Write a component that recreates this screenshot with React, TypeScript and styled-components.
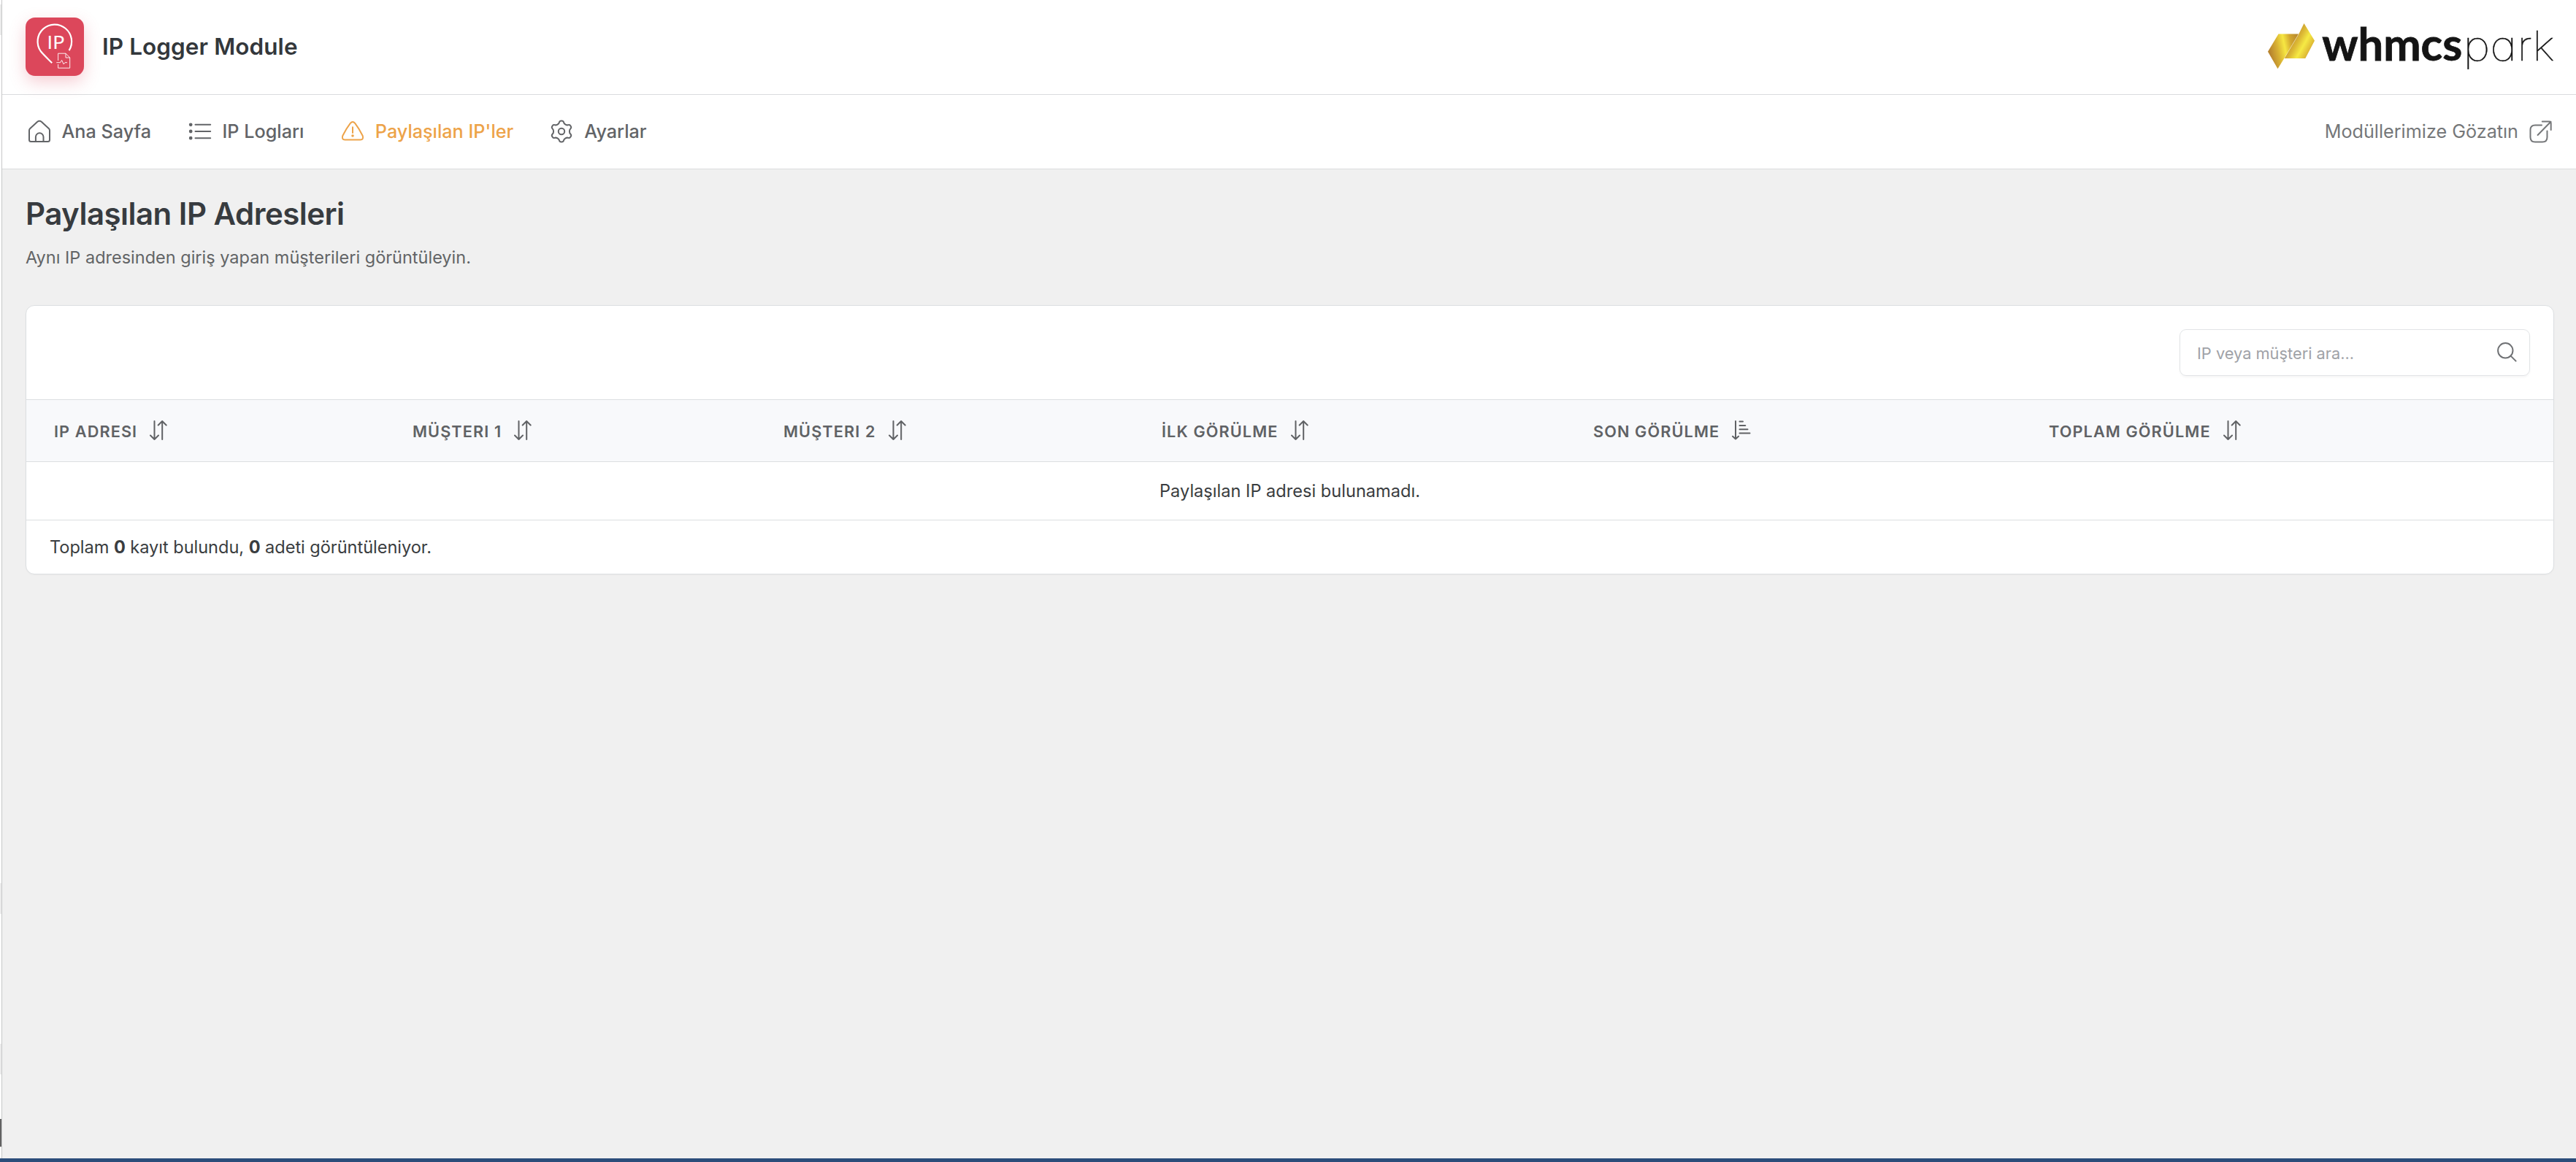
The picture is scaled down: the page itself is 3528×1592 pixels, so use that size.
import React from "react";
import styled, { createGlobalStyle } from "styled-components";

const GlobalStyle = createGlobalStyle`
  *, *::before, *::after { box-sizing: border-box; }
  body {
    margin: 0;
    background: #f0f0f0;
    font-family: Inter, "Liberation Sans", sans-serif;
    color: #3a3d40;
  }
  h1, p { margin: 0; }
`;

const Frame = styled.div`
  display: grid;
  grid-template-columns: 3px 1fr;
  grid-template-rows: 1fr 5px;
  height: 1592px;
`;

const Rail = styled.aside`
  display: flex;
  flex-direction: column;
  background: #fff;
  border-right: 1px solid #c6c7c8;
`;

const RailMark = styled.span<{ $gap: number; $size: number; $tone: string }>`
  flex: none;
  height: ${(p) => p.$size}px;
  margin-top: ${(p) => p.$gap}px;
  background: ${(p) => p.$tone};
`;

const BottomBar = styled.div`
  grid-column: 1 / -1;
  background: #2b4d7a;
`;

const Main = styled.div`
  min-width: 0;
`;

const Header = styled.header`
  display: flex;
  align-items: center;
  justify-content: space-between;
  height: 130px;
  padding: 0 28px 1px 32px;
  background: #fff;
  border-bottom: 1px solid #dadcde;
`;

const Brand = styled.div`
  display: flex;
  align-items: center;
  gap: 25px;
`;

const BrandTile = styled.span`
  display: flex;
  width: 80px;
  height: 80px;
  border-radius: 13px;
  background: #dc475b;
  box-shadow: 0 8px 22px rgba(220, 71, 91, 0.27);
`;

const BrandName = styled.span`
  font-size: 31.5px;
  font-weight: 600;
  line-height: 40px;
  letter-spacing: 0.07px;
  color: #33373b;
`;

const Nav = styled.nav`
  display: flex;
  align-items: center;
  gap: 48px;
  height: 102px;
  padding: 0 33px 1px 32px;
  background: #fff;
  border-bottom: 1px solid #dadcde;
`;

const NavItem = styled.a<{ $active?: boolean; $trailing?: boolean }>`
  display: flex;
  align-items: center;
  gap: ${(p) => (p.$trailing ? 15 : 13)}px;
  margin-left: ${(p) => (p.$trailing ? "auto" : 0)};
  font-size: 25.2px;
  font-weight: ${(p) => (p.$trailing ? 400 : 500)};
  line-height: 36px;
  white-space: nowrap;
  color: ${(p) => (p.$active ? "#eda349" : p.$trailing ? "#757779" : "#626467")};
`;

const Icon = styled.svg`
  flex: none;
  fill: none;
  stroke: currentColor;
  stroke-width: 2;
  stroke-linecap: round;
  stroke-linejoin: round;
`;

const NavIcon = styled(Icon)`
  margin-left: 0.5px;
`;

const Content = styled.main`
  padding: 36px 30px 0 32px;
`;

const PageTitle = styled.h1`
  font-size: 42px;
  font-weight: 600;
  line-height: 50px;
  letter-spacing: -0.52px;
  color: #373b3f;
`;

const PageLead = styled.p`
  margin-top: 17px;
  font-size: 23.5px;
  line-height: 36px;
  color: #626466;
`;

const Card = styled.section`
  margin-top: 47px;
  overflow: hidden;
  background: #fff;
  border: 1px solid #dcdfe1;
  border-radius: 12px;
  box-shadow: 0 1px 2px rgba(0, 0, 0, 0.03);
`;

const Toolbar = styled.div`
  display: flex;
  justify-content: flex-end;
  height: 128px;
  padding: 32px;
`;

const SearchBox = styled.label`
  display: flex;
  align-items: center;
  justify-content: space-between;
  width: 480px;
  height: 64px;
  padding: 0 17px 0 23px;
  border: 1px solid #e2e4e6;
  border-radius: 9px;
  box-shadow: 0 2px 3px rgba(0, 0, 0, 0.04);
  color: #707275;
`;

const SearchInput = styled.input`
  flex: 1;
  min-width: 0;
  height: 40px;
  padding: 1px 0 0;
  border: 0;
  outline: 0;
  background: none;
  font: 400 21.8px Inter, sans-serif;
  &::placeholder { color: #a0a2a7; opacity: 1; }
`;

const SearchGlyph = styled(Icon)`
  margin-bottom: 2px;
`;

const Table = styled.table`
  width: 100%;
  table-layout: fixed;
  border-spacing: 0;
`;

const HeadCell = styled.th`
  height: 86px;
  padding: 0 0 0 38px;
  border: solid #dcdfe1;
  border-width: 1px 0;
  background: #f8f9fb;
  text-align: left;
`;

const HeadLabel = styled.span`
  display: flex;
  align-items: center;
  gap: 17px;
  padding-top: 2px;
  font-size: 21.7px;
  font-weight: 600;
  letter-spacing: 1.1px;
  line-height: 32px;
  white-space: nowrap;
  color: #606265;
`;

const SortIcon = styled(Icon)`
  margin-bottom: 4px;
`;

const EmptyCell = styled.td`
  height: 80px;
  padding: 0;
  border-bottom: 1px solid #dcdfe1;
  font-size: 23.6px;
  text-align: center;
`;

const CardFooter = styled.div`
  height: 73px;
  padding: 0 32px;
  font-size: 23.6px;
  line-height: 73px;
  letter-spacing: -0.05px;
`;

const ParkText = styled.text`
  font: 100 55.5px Inter, sans-serif;
  font-feature-settings: "cv11";
  fill: #141414;
  stroke: #141414;
  stroke-width: 0.4px;
`;

const WhmcsText = styled.text`
  font: 700 60.5px Lato, sans-serif;
  fill: #141414;
  stroke: #141414;
  stroke-width: 0.8px;
`;

function IpBadge() {
  return (
    <svg width="80" height="80" viewBox="0 0 80 80" fill="none" stroke="#fff" strokeLinejoin="round">
      <path d="M59.6 45.2A23.3 23.3 0 1 0 20.6 46C25 51.5 30.5 56.5 36.2 62.2" strokeWidth="2.2" />
      <text x="29.6" y="43" fontSize="25.5" fontFamily="Open Sans" fill="#fff" strokeWidth="0.2" textLength="24" lengthAdjust="spacingAndGlyphs">
        IP
      </text>
      <path d="M44.6 59V49.2H55L60.7 55V69.2H44.6V64" strokeWidth="0.9" />
      <path d="M55 49.2V55H60.7" strokeWidth="0.9" />
      <path d="M42.3 61.7H47.6L49.6 58.5L52.2 64L54 61.7H57" strokeWidth="0.9" />
    </svg>
  );
}

function SparkLogo() {
  return (
    <svg width="395" height="92" viewBox="0 -14 395 92">
      <defs>
        <linearGradient id="goldLeft" gradientUnits="userSpaceOnUse" x1="2" y1="30" x2="42" y2="22">
          <stop offset="0" stopColor="#b8842e" />
          <stop offset="0.28" stopColor="#d9b233" />
          <stop offset="0.52" stopColor="#f6e742" />
          <stop offset="0.75" stopColor="#d3a72f" />
          <stop offset="1" stopColor="#b98a2d" />
        </linearGradient>
        <linearGradient id="goldRight" gradientUnits="userSpaceOnUse" x1="30" y1="24" x2="62" y2="42">
          <stop offset="0" stopColor="#c08f2e" />
          <stop offset="0.3" stopColor="#dcb835" />
          <stop offset="0.55" stopColor="#f6ea44" />
          <stop offset="0.8" stopColor="#e0bd37" />
          <stop offset="1" stopColor="#c4952f" />
        </linearGradient>
      </defs>
      <polygon points="1,38.7 15.5,14.5 43,14.5 23.3,48 14.5,62.3" fill="url(#goldLeft)" />
      <polygon points="50.5,0 65,23.7 52.3,48 23.7,48 43,15.3" fill="url(#goldRight)" />
      <WhmcsText x="75.2" y="51.3" textLength="192" lengthAdjust="spacingAndGlyphs">
        whmcs
      </WhmcsText>
      <ParkText x="268.5" y="51.3" textLength="125.3" lengthAdjust="spacingAndGlyphs">
        park
      </ParkText>
    </svg>
  );
}

const HomeIcon = () => (
  <NavIcon width="36" height="36" viewBox="0 0 36 36">
    <path d="M4 16.8Q4 15.3 5 14.3L15 5Q18 2.6 21 5L31 14.3Q32 15.3 32 16.8V29.5Q32 32 29.5 32H6.5Q4 32 4 29.5Z" />
    <path d="M12.9 32V25.6A5.3 5.3 0 0 1 23.5 25.6V32" />
  </NavIcon>
);

const ListIcon = () => (
  <NavIcon width="36" height="36" viewBox="0 0 36 36">
    {[8.8, 18, 27.2].map((y) => (
      <React.Fragment key={y}>
        <circle cx="5.2" cy={y} r="1.4" fill="currentColor" />
        <path d={`M11.5 ${y}H32.2`} />
      </React.Fragment>
    ))}
  </NavIcon>
);

const WarningIcon = () => (
  <NavIcon width="36" height="36" viewBox="0 0 36 36">
    <path d="M14.8 6.9Q18 3 21.2 6.9C25 11.8 28.6 17.8 31.7 24Q33.4 29.3 28.6 29.4H7.4Q2.6 29.3 4.3 24C7.4 17.8 11 11.8 14.8 6.9Z" />
    <path d="M18 12.2V20" />
    <circle cx="18" cy="24" r="0.8" fill="currentColor" />
  </NavIcon>
);

/* Six rounded teeth around the hub, smoothed through edge midpoints. */
function gearPath() {
  const pts: [number, number][] = [];
  const tooth: [number, number][] = [
    [-10, 14.8],
    [10, 14.8],
    [17, 11.2],
    [43, 11.2],
  ];
  for (let i = 0; i < 6; i++) {
    tooth.forEach(([da, r]) => {
      const t = ((i * 60 - 90 + da) * Math.PI) / 180;
      pts.push([18 + r * Math.cos(t), 18 + r * Math.sin(t)]);
    });
  }
  const mid = (a: [number, number], b: [number, number]) =>
    `${((a[0] + b[0]) / 2).toFixed(2)} ${((a[1] + b[1]) / 2).toFixed(2)}`;
  const n = pts.length;
  return (
    `M${mid(pts[n - 1], pts[0])}` +
    pts.map((p, i) => `Q${p[0].toFixed(2)} ${p[1].toFixed(2)} ${mid(p, pts[(i + 1) % n])}`).join("") +
    "Z"
  );
}

const GearIcon = () => (
  <Icon width="36" height="36" viewBox="0 0 36 36">
    <path d={gearPath()} />
    <circle cx="18" cy="18" r="4.2" />
  </Icon>
);

const ExternalIcon = () => (
  <Icon width="31" height="31" viewBox="0 0 31 31">
    <path d="M17 6.5H8Q1.5 6.5 1.5 13V23Q1.5 29.5 8 29.5H18Q24.5 29.5 24.5 23V14.5" />
    <path d="M11.6 20L29.5 1.8M17.8 1.5H27.5Q29.7 1.5 29.7 3.7V13" />
  </Icon>
);

const SearchIcon = () => (
  <SearchGlyph width="27" height="27" viewBox="0 0 27 27">
    <circle cx="11.3" cy="11.3" r="10.2" />
    <path d="M18.6 18.6L25.6 25.6" />
  </SearchGlyph>
);

const SortBothIcon = () => (
  <SortIcon width="25" height="27" viewBox="0 0 25 27">
    <path d="M6.5 1V26M1 20.5L6.5 26L12 20.5" />
    <path d="M17.2 26V1M11.7 6.5L17.2 1L22.7 6.5" />
  </SortIcon>
);

const SortAscIcon = () => (
  <SortIcon width="26" height="27" viewBox="0 0 26 27">
    <path d="M5 1V25.5M1 21.8L5 25.5L9 21.8" />
    <path d="M10.5 1.5H15M10.5 6.9H18.3M10.5 12.2H21.5M10.5 17.6H24.5" />
  </SortIcon>
);

const navItems = [
  { label: "Ana Sayfa", icon: <HomeIcon /> },
  { label: "IP Logları", icon: <ListIcon /> },
  { label: "Paylaşılan IP'ler", icon: <WarningIcon />, active: true },
  { label: "Ayarlar", icon: <GearIcon /> },
];

const columns: { label: string; width?: number; sorted?: boolean }[] = [
  { label: "IP ADRESI", width: 491 },
  { label: "MÜŞTERI 1", width: 508 },
  { label: "MÜŞTERI 2", width: 518 },
  { label: "İLK GÖRÜLME", width: 591 },
  { label: "SON GÖRÜLME", width: 624, sorted: true },
  { label: "TOPLAM GÖRÜLME" },
];

const railMarks = [
  { gap: 6, size: 42, tone: "#ebebeb" },
  { gap: 1162, size: 42, tone: "#ebebeb" },
  { gap: 178, size: 42, tone: "#ebebeb" },
  { gap: 61, size: 38, tone: "#626262" },
];

export default function App() {
  return (
    <>
      <GlobalStyle />
      <Frame>
        <Rail>
          {railMarks.map((m, i) => (
            <RailMark key={i} $gap={m.gap} $size={m.size} $tone={m.tone} />
          ))}
        </Rail>
        <Main>
          <Header>
            <Brand>
              <BrandTile>
                <IpBadge />
              </BrandTile>
              <BrandName>IP Logger Module</BrandName>
            </Brand>
            <SparkLogo />
          </Header>
          <Nav>
            {navItems.map((item) => (
              <NavItem key={item.label} $active={item.active}>
                {item.icon}
                {item.label}
              </NavItem>
            ))}
            <NavItem $trailing>
              Modüllerimize Gözatın
              <ExternalIcon />
            </NavItem>
          </Nav>
          <Content>
            <PageTitle>Paylaşılan IP Adresleri</PageTitle>
            <PageLead>Aynı IP adresinden giriş yapan müşterileri görüntüleyin.</PageLead>
            <Card>
              <Toolbar>
                <SearchBox>
                  <SearchInput placeholder="IP veya müşteri ara..." />
                  <SearchIcon />
                </SearchBox>
              </Toolbar>
              <Table>
                <colgroup>
                  {columns.map((c) => (
                    <col key={c.label} width={c.width} />
                  ))}
                </colgroup>
                <thead>
                  <tr>
                    {columns.map((c) => (
                      <HeadCell key={c.label}>
                        <HeadLabel>
                          {c.label}
                          {c.sorted ? <SortAscIcon /> : <SortBothIcon />}
                        </HeadLabel>
                      </HeadCell>
                    ))}
                  </tr>
                </thead>
                <tbody>
                  <tr>
                    <EmptyCell colSpan={columns.length}>Paylaşılan IP adresi bulunamadı.</EmptyCell>
                  </tr>
                </tbody>
              </Table>
              <CardFooter>
                Toplam <b>0</b> kayıt bulundu, <b>0</b> adeti görüntüleniyor.
              </CardFooter>
            </Card>
          </Content>
        </Main>
        <BottomBar />
      </Frame>
    </>
  );
}
